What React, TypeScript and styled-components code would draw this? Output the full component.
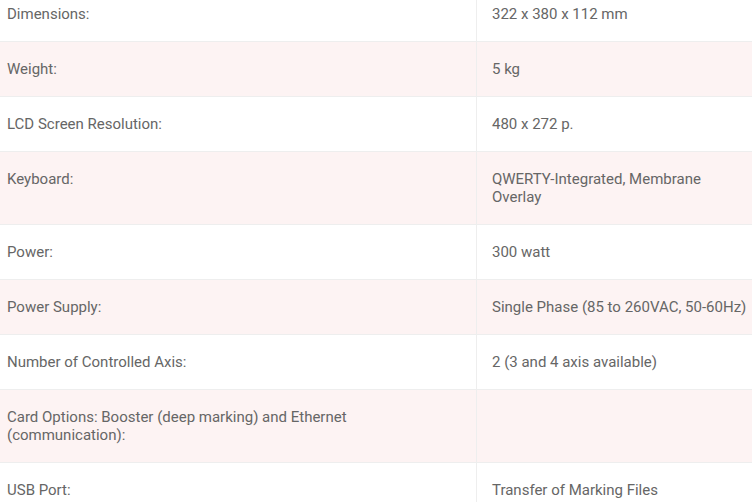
import React from "react";
import styled, { createGlobalStyle } from "styled-components";

const Global = createGlobalStyle`
  html, body { margin: 0; padding: 0; background: #fff; }
  body { font-family: Roboto, "Liberation Sans", sans-serif; overflow: hidden; }
`;

const Table = styled.div`
  width: 752px;
  margin-top: -13px;
  display: flex;
  flex-direction: column;
`;

const Row = styled.div<{ $alt: boolean }>`
  display: grid;
  grid-template-columns: 477px 1fr;
  background: ${(p) => (p.$alt ? "#fdf3f3" : "#ffffff")};
  border-bottom: 1px solid #eeeeee;
`;

const Label = styled.div`
  padding: 18px 110px 18px 7px;
  border-right: 1px solid #eeeeee;
  font-size: 15px;
  line-height: 18px;
  color: #666666;
`;

const Value = styled.div`
  padding: 18px 0 18px 15px;
  font-size: 15px;
  line-height: 18px;
  color: #666666;
`;

const rows: [string, string][] = [
  ["Dimensions:", "322 x 380 x 112 mm"],
  ["Weight:", "5 kg"],
  ["LCD Screen Resolution:", "480 x 272 p."],
  ["Keyboard:", "QWERTY-Integrated, Membrane Overlay"],
  ["Power:", "300 watt"],
  ["Power Supply:", "Single Phase (85 to 260VAC, 50-60Hz)"],
  ["Number of Controlled Axis:", "2 (3 and 4 axis available)"],
  ["Card Options: Booster (deep marking) and Ethernet (communication):", ""],
  ["USB Port:", "Transfer of Marking Files"],
];

export default function App() {
  return (
    <>
      <Global />
      <Table>
        {rows.map(([k, v], i) => (
          <Row key={k} $alt={i % 2 === 1}>
            <Label>{k}</Label>
            <Value>{v}</Value>
          </Row>
        ))}
      </Table>
    </>
  );
}
